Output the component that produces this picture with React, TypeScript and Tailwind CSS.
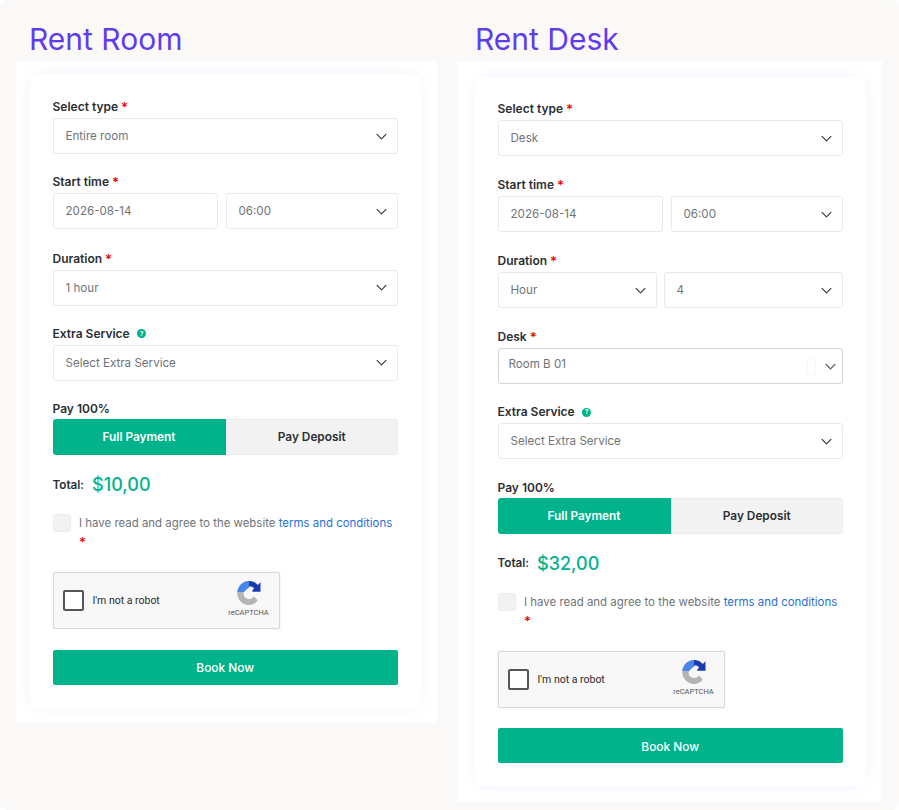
import React from "react";

const font = { fontFamily: "Inter, 'Liberation Sans', sans-serif" };

function Chevron({ className = "text-[#343a40]" }: { className?: string }) {
  return (
    <svg viewBox="0 0 16 16" className={`h-[13px] w-[13px] shrink-0 ${className}`} fill="none" stroke="currentColor" strokeWidth="1.4" strokeLinecap="round" strokeLinejoin="round">
      <path d="m2.5 5.5 5.5 5.5 5.5-5.5" />
    </svg>
  );
}

function Label({ text, req = true, help = false }: { text: string; req?: boolean; help?: boolean }) {
  return (
    <div className="mb-[3.5px] flex h-4 items-center pt-[1px] text-[12px] font-semibold leading-4 text-[#2b2f33]">
      <span>{text}</span>
      {req && <span className="ml-[3px] text-[13px] font-semibold text-[#f00000]">*</span>}
      {help && (
        <span className="ml-[7.5px] flex h-[9px] w-[9px] items-center justify-center rounded-full bg-[#00b38a] text-[6px] font-bold leading-none text-white">?</span>
      )}
    </div>
  );
}

function Field({ text, select = true, className = "" }: { text: string; select?: boolean; className?: string }) {
  return (
    <div className={`flex h-9 items-center justify-between rounded-[3px] border border-[#e8e9ea] bg-white pl-3 pr-[9px] text-[11.6px] text-[#6f7479] ${className}`}>
      <span className="pt-[1px]">{text}</span>
      {select && <Chevron />}
    </div>
  );
}

function DeskField() {
  return (
    <div className="relative flex h-9 items-center justify-between rounded-[3px] border border-[#d3d5d8] bg-white pl-[10px] pr-[5px] text-[11.6px] text-[#6f7479]">
      <span className="-mt-[3px]">Room B 01</span>
      <span className="absolute right-[26px] top-[8px] h-[19px] w-[9px] rounded-[3px] border border-[#f7f8f9]" />
      <Chevron className="text-[#4a5168]" />
    </div>
  );
}

function RecaptchaLogo() {
  return (
    <svg viewBox="0 0 24 24" className="h-6 w-6">
      <path d="M13 0C6.5-.4 1 4.3.2 11H7L9.5 8.5 14 5Z" fill="#4a86e8" />
      <path d="M12 0C15.6 0 18.6 1.5 20.8 3.9L23.5 1.2V10.8H14L17.2 7.5C15.9 6 14.2 5 12 5Z" fill="#1a3bb0" />
      <path d="M.2 11H7C6.6 12 6.4 13 6.7 14C7.4 16.6 9.5 18 12 18C14 18 15.8 17 17 15.4L20.8 19.4C18.6 22.2 15.5 24 12 24C5.4 24 0 18.4.2 11Z" fill="#b4b4b4" />
      <circle cx="12.3" cy="11.5" r="3.3" fill="#f8f8f8" />
    </svg>
  );
}

function Recaptcha() {
  return (
    <div className="relative flex h-[57px] w-[227px] items-center rounded-[2px] border border-[#d8d8d8] bg-[#f8f8f8] pl-[9px] shadow-[0_0_3px_rgba(0,0,0,0.08)]">
      <span className="h-[21px] w-[21px] rounded-[2px] border-2 border-[#555] bg-white" />
      <span className="ml-[9px] pt-[1px] text-[10.5px] text-[#2a2a2a]" style={{ fontFamily: "Roboto, sans-serif" }}>I'm not a robot</span>
      <div className="absolute right-[9px] top-[8px] flex w-[42px] flex-col items-center">
        <RecaptchaLogo />
        <span className="mt-[3px] text-[7.5px] leading-[10px] text-[#555]" style={{ fontFamily: "Roboto, sans-serif" }}>reCAPTCHA</span>
      </div>
    </div>
  );
}

function RoomForm() {
  return (
    <div className="flex flex-col">
      <Label text="Select type" />
      <Field text="Entire room" />

      <div className="mt-[19.8px]"><Label text="Start time" /></div>
      <div className="flex gap-[7.5px]">
        <Field text="2026-08-14" select={false} className="w-[165.5px]" />
        <Field text="06:00" className="flex-1" />
      </div>

      <div className="mt-[21.2px]"><Label text="Duration" /></div>
      <Field text="1 hour" />

      <div className="mt-[19.5px]"><Label text="Extra Service" req={false} help /></div>
      <Field text="Select Extra Service" />

      <Payment total="$10,00" mt="mt-[19.8px]" bookMt="mt-[21px]" />
    </div>
  );
}

function DeskForm() {
  return (
    <div className="flex flex-col">
      <Label text="Select type" />
      <Field text="Desk" />

      <div className="mt-[20.5px]"><Label text="Start time" /></div>
      <div className="flex gap-[7.5px]">
        <Field text="2026-08-14" select={false} className="w-[165.5px]" />
        <Field text="06:00" className="flex-1" />
      </div>

      <div className="mt-[20.5px]"><Label text="Duration" /></div>
      <div className="flex gap-[7px]">
        <Field text="Hour" className="w-[159px]" />
        <Field text="4" className="flex-1" />
      </div>

      <div className="mt-[20.5px]"><Label text="Desk" /></div>
      <DeskField />

      <div className="mt-[19.5px]"><Label text="Extra Service" req={false} help /></div>
      <Field text="Select Extra Service" />

      <Payment total="$32,00" mt="mt-[20.5px]" bookMt="mt-[20.5px]" />
    </div>
  );
}

function Payment({ total, mt, bookMt }: { total: string; mt: string; bookMt: string }) {
  return (
    <>
      <div className={`${mt} h-4 text-[12px] font-semibold leading-4 text-[#2b2f33]`}>Pay 100%</div>
      <div className="mt-[2.5px] flex h-9 text-[11.8px] font-semibold">
        <div className="flex w-[173px] items-center justify-center rounded-l-[3px] bg-[#00b38a] pt-[1px] text-white">Full Payment</div>
        <div className="flex flex-1 items-center justify-center rounded-r-[3px] border border-[#ebebeb] bg-[#f2f2f2] pt-[1px] text-[#2b2f33]">Pay Deposit</div>
      </div>

      <div className="mt-[17px] flex h-[25px] items-center">
        <span className="pt-[1px] text-[11.7px] font-semibold text-[#2b2f33]">Total:</span>
        <span className="-mt-[1px] ml-[8px] text-[18px] font-medium text-[#00b38a]">{total}</span>
      </div>

      <div className="mt-[16.5px] flex h-[38px]">
        <span className="h-[18.5px] w-[18.5px] shrink-0 rounded-[3px] border border-[#ececec] bg-[#f2f2f2]" />
        <div className="ml-[8px] whitespace-nowrap text-[11.45px] leading-[18px] text-[#6f7479]">
          <div>I have read and agree to the website <span className="text-[#1f6fd6]">terms and conditions</span></div>
          <div className="mt-[1px] text-[13px] font-semibold leading-[19px] text-[#f00000]">*</div>
        </div>
      </div>

      <div className="mt-[20px]"><Recaptcha /></div>

      <div className={`${bookMt} flex h-[35px] items-center justify-center rounded-[2px] bg-[#00b38a] pt-[2px] text-[11.9px] font-medium text-white`}>Book Now</div>
    </>
  );
}

function Heading({ text, className }: { text: string; className: string }) {
  return <h2 className={`flex h-[61px] items-center pt-[16px] text-[30px] font-normal leading-none text-[#5f3dee] ${className}`}>{text}</h2>;
}

const cardCls = "rounded-[10px] bg-white pl-[22.5px] pr-[23px] shadow-[0_0_14px_rgba(90,110,240,0.08)]";

export default function App() {
  return (
    <div className="bg-white" style={font}>
      <div className="flex h-[810px] w-[899px] items-start overflow-hidden rounded-[8px] bg-[#faf9f7]">
        <div className="ml-[16px] w-[421px]">
          <Heading text="Rent Room" className="pl-[13px]" />
          <div className="bg-white pb-[14px] pl-[14px] pr-[16px] pt-[13px]">
            <div className={`${cardCls} pb-[24px] pt-[24.5px]`}>
              <RoomForm />
            </div>
          </div>
        </div>
        <div className="ml-[20px] w-[425px]">
          <Heading text="Rent Desk" className="pl-[18px]" />
          <div className="bg-white pb-[15.5px] pl-[18px] pr-[16px] pt-[16px]">
            <div className={`${cardCls} pb-[23px] pt-[23.5px]`}>
              <DeskForm />
            </div>
          </div>
        </div>
      </div>
    </div>
  );
}
